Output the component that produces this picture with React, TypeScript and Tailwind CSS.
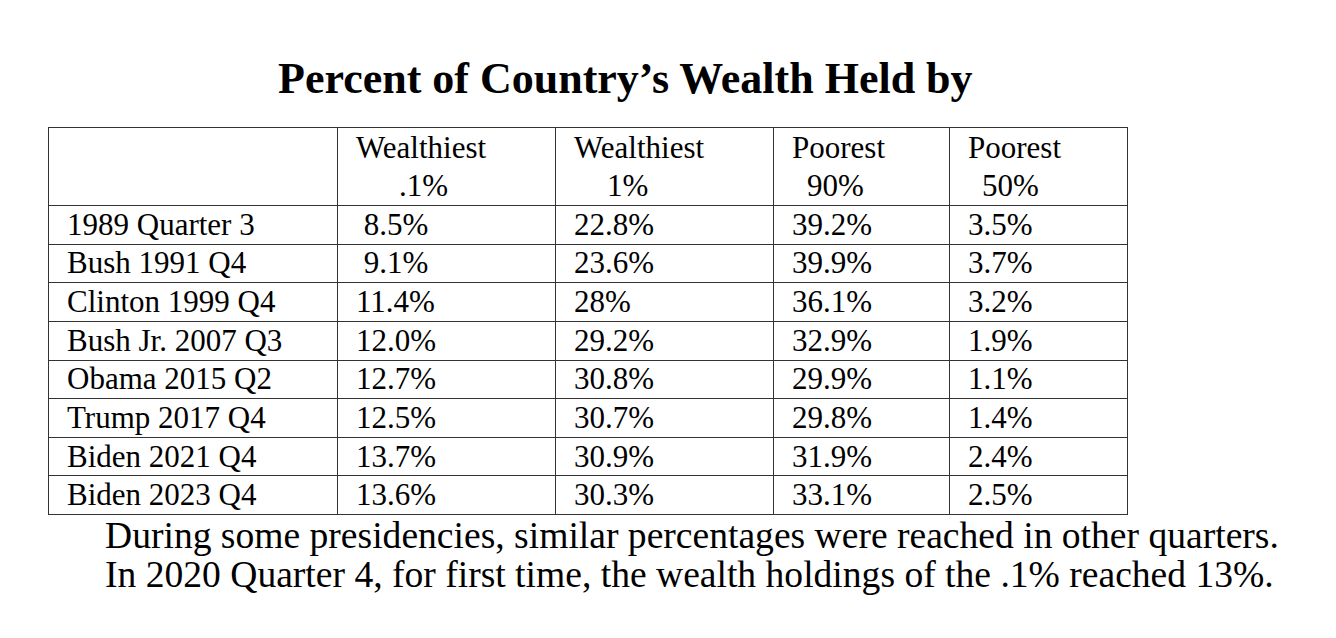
const HEADERS = [
  { top: "Wealthiest", bottom: ".1%", indent: "pl-[43px]" },
  { top: "Wealthiest", bottom: "1%", indent: "pl-[33px]" },
  { top: "Poorest", bottom: "90%", indent: "pl-[15px]" },
  { top: "Poorest", bottom: "50%", indent: "pl-[14px]" },
];

const ROWS = [
  ["1989 Quarter 3", " 8.5%", "22.8%", "39.2%", "3.5%"],
  ["Bush 1991 Q4", " 9.1%", "23.6%", "39.9%", "3.7%"],
  ["Clinton 1999 Q4", "11.4%", "28%", "36.1%", "3.2%"],
  ["Bush Jr. 2007 Q3", "12.0%", "29.2%", "32.9%", "1.9%"],
  ["Obama 2015 Q2", "12.7%", "30.8%", "29.9%", "1.1%"],
  ["Trump 2017 Q4", "12.5%", "30.7%", "29.8%", "1.4%"],
  ["Biden 2021 Q4", "13.7%", "30.9%", "31.9%", "2.4%"],
  ["Biden 2023 Q4", "13.6%", "30.3%", "33.1%", "2.5%"],
];

export default function App() {
  return (
    <div className="h-[638px] w-[1336px] bg-white pt-[57px] font-['Liberation_Serif','Times_New_Roman',serif] text-black">
      {/* Title */}
      <h1 className="h-[44px] pl-[278px] text-[44px] font-bold leading-[44px] whitespace-nowrap">
        Percent of Country’s Wealth Held by
      </h1>

      {/* Table */}
      <table className="ml-[48px] mt-[26px] w-[1079px] table-fixed border-collapse border border-[#333] text-[31px] leading-[38px]">
        <colgroup>
          <col className="w-[289px]" />
          <col className="w-[218px]" />
          <col className="w-[218px]" />
          <col className="w-[176px]" />
          <col className="w-[178px]" />
        </colgroup>
        <thead>
          <tr className="h-[78px]">
            <th className="border border-[#333]" />
            {HEADERS.map((h, i) => (
              <th key={i} className="border border-[#333] pl-[18px] text-left align-middle font-normal">
                <div className="whitespace-nowrap">{h.top}</div>
                <div className={`whitespace-nowrap ${h.indent}`}>{h.bottom}</div>
              </th>
            ))}
          </tr>
        </thead>
        <tbody>
          {ROWS.map((row) => (
            <tr key={row[0]} className="h-[38.625px]">
              {row.map((cell, i) => (
                <td key={i} className="border border-[#333] pl-[18px] align-middle leading-[36px] whitespace-pre">
                  {cell}
                </td>
              ))}
            </tr>
          ))}
        </tbody>
      </table>

      {/* Note */}
      <div className="mt-[1px] pl-[105px] text-[37.6px] leading-[39px] whitespace-nowrap">
        <p>During some presidencies, similar percentages were reached in other quarters.</p>
        <p>In 2020 Quarter 4, for first time, the wealth holdings of the .1% reached 13%.</p>
      </div>
    </div>
  );
}
